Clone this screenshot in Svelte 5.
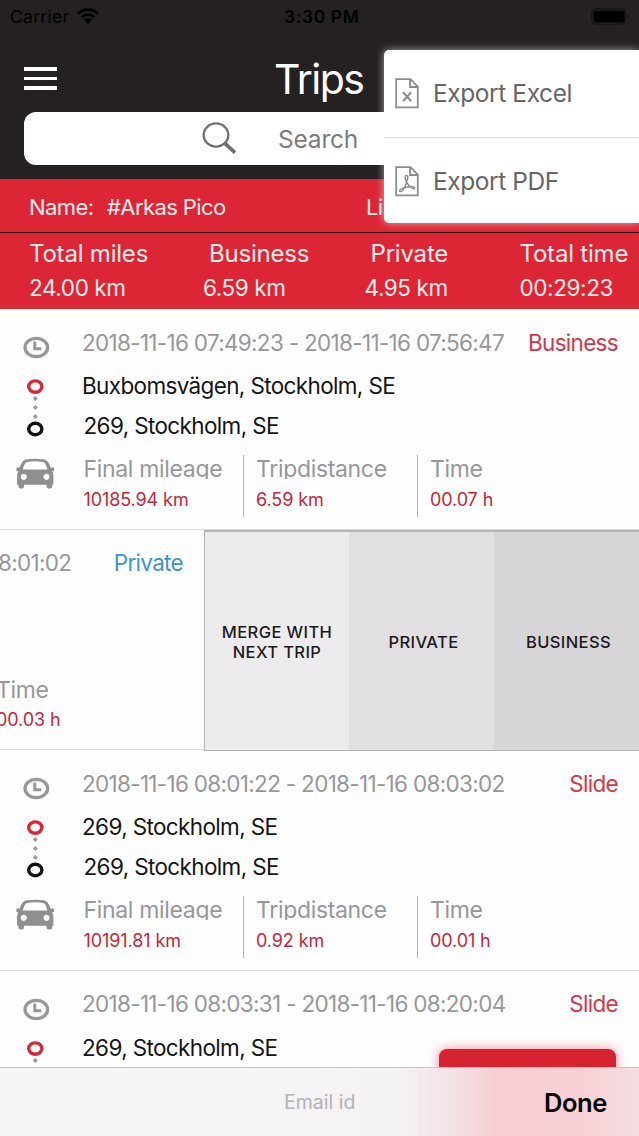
<script>
	const totals = [
		{ label: 'Total miles', value: '24.00 km', shift: 0 },
		{ label: 'Business', value: '6.59 km', shift: 6 },
		{ label: 'Private', value: '4.95 km', shift: 6 },
		{ label: 'Total time', value: '00:29:23', shift: 0 },
	];

	const trips = [
		{
			period: '2018-11-16 07:49:23 - 2018-11-16 07:56:47',
			type: 'Business',
			from: 'Buxbomsvägen, Stockholm, SE',
			to: '269, Stockholm, SE',
			mileage: '10185.94 km',
			distance: '6.59 km',
			time: '00.07 h',
		},
		{ swiped: true, period: '8:01:02', type: 'Private', time: '00.03 h' },
		{
			period: '2018-11-16 08:01:22 - 2018-11-16 08:03:02',
			type: 'Slide',
			from: '269, Stockholm, SE',
			to: '269, Stockholm, SE',
			mileage: '10191.81 km',
			distance: '0.92 km',
			time: '00.01 h',
		},
		{
			period: '2018-11-16 08:03:31 - 2018-11-16 08:20:04',
			type: 'Slide',
			from: '269, Stockholm, SE',
		},
	];
</script>

{#snippet file()}
	<path d="M1.2 1.2h14.3l7.3 7.3v20.8H1.2z M15 1.2v7.8h7.8" />
{/snippet}

<div class="screen">
	<header>
		<div class="status">
			<span class="carrier">Carrier</span>
			<svg class="wifi" width="22" height="16" viewBox="0 0 22 16">
				<path d="M1.2 5.6a14 14 0 0 1 19.6 0M4.7 9.2a9 9 0 0 1 12.6 0" fill="none" stroke="#000" stroke-width="2.9" />
				<path d="M7.2 11.6a5.4 5.4 0 0 1 7.6 0L11 15.5z" />
			</svg>
			<span class="clock">3:30 PM</span>
			<svg class="battery" width="38" height="17" viewBox="0 0 38 17">
				<rect x=".8" y=".8" width="33.5" height="15.4" rx="4" fill="none" stroke="#131011" />
				<rect x="2.5" y="2.8" width="31" height="11.6" rx="2" />
				<path d="M36 6c1.6.7 1.6 4 0 4.8z" fill="#131011" />
			</svg>
		</div>
		<div class="title-bar">
			<div class="burger"><i></i><i></i><i></i></div>
			<h1>Trips</h1>
		</div>
		<div class="search">
			<svg width="36" height="34" viewBox="0 0 36 34" fill="none" stroke="#6f6f6f">
				<ellipse cx="14" cy="13" rx="12.3" ry="11.6" stroke-width="2.3" />
				<path d="M22.6 21.2L33 30.6" stroke-width="3.6" />
			</svg>
			<span>Search</span>
		</div>
	</header>

	<section class="owner">
		<span class="key">Name:</span>
		<span class="name">#Arkas Pico</span>
		<span>Li</span>
	</section>

	<section class="totals">
		{#each totals as total}
			<div>
				<div class="total-label" style:padding-left="{total.shift}px">{total.label}</div>
				<div class="total-value">{total.value}</div>
			</div>
		{/each}
	</section>

	<main>
		{#each trips as trip}
			{#if trip.swiped}
				<article class="trip">
					<div class="rest">
						<div class="head">
							<span class="period">{trip.period}</span>
							<span class="type private">{trip.type}</span>
						</div>
						<div class="cell">
							<div class="cell-label">Time</div>
							<div class="cell-value">{trip.time}</div>
						</div>
					</div>
					<div class="actions">
						<button>MERGE WITH<br />NEXT TRIP</button>
						<button>PRIVATE</button>
						<button>BUSINESS</button>
					</div>
				</article>
			{:else}
				<article class="trip">
					<svg class="rail" width="70" height="200" viewBox="0 0 70 200" fill="none">
						<ellipse cx="36.3" cy="38.5" rx="11.3" ry="9.1" stroke="#979797" stroke-width="3.3" />
						<path d="M34.8 32.5v7.2h6.5" stroke="#979797" stroke-width="3" />
						<g fill="#9a9aa2">
							<path d="M35.3 86.9l2.6 2.6-2.6 2.6-2.6-2.6z" />
							<path d="M35.3 95.9l2.6 2.6-2.6 2.6-2.6-2.6z" />
							<path d="M35.3 104.9l2.6 2.6-2.6 2.6-2.6-2.6z" />
						</g>
						<ellipse cx="35.3" cy="77.6" rx="6.6" ry="5.7" stroke="#d6283a" stroke-width="3.4" />
						<ellipse cx="35.3" cy="120" rx="6.6" ry="5.7" stroke="#111" stroke-width="3.4" />
						<path
							fill="#8f8f8f"
							fill-rule="evenodd"
							d="M19.700 158.500C21.500 153 23.500 151 27 150.300c5-.9 11.500-.9 16.300 0 3.500.7 5.500 2.700 7.200 8.200h2.800c1.200 0 1.200 3.800 0 3.800h-1.400c1 1.300 1.500 2.500 1.500 5v8.500h-1.200v2c0 2.400-5.600 2.400-5.600 0v-2H24v2c0 2.400-5.600 2.400-5.600 0v-2h-1.300v-8.500c0-2.500.5-3.700 1.500-5h-1.400c-1.200 0-1.200-3.800 0-3.800z M22.800 160.500h24.700c-1.200-4.200-2-6.900-4.600-7.500-4.500-.9-11-.9-15.500 0-2.600.6-3.400 3.300-4.600 7.500z M23.700 164.700a3.100 3.100 0 1 0 .1 0z M46.500 164.700a3.100 3.100 0 1 0 .1 0z"
						/>
					</svg>
					<div class="body">
						<div class="head">
							<span class="period">{trip.period}</span>
							<span class="type">{trip.type}</span>
						</div>
						<div class="address">{trip.from}</div>
						{#if trip.to}
							<div class="address to">{trip.to}</div>
							<div class="cells">
								<div class="cell">
									<div class="cell-label">Final mileage</div>
									<div class="cell-value">{trip.mileage}</div>
								</div>
								<div class="cell">
									<div class="cell-label">Tripdistance</div>
									<div class="cell-value">{trip.distance}</div>
								</div>
								<div class="cell">
									<div class="cell-label">Time</div>
									<div class="cell-value">{trip.time}</div>
								</div>
							</div>
						{/if}
					</div>
				</article>
			{/if}
		{/each}
	</main>

	<div class="menu">
		<div class="item">
			<svg width="24" height="31" viewBox="0 0 24 31" fill="none" stroke="#8d8d8d" stroke-width="1.8">
				{@render file()}
				<path d="M8 14.2l8.2 9M16.2 14.2l-8.2 9" stroke-width="2.1" />
			</svg>
			<span>Export Excel</span>
		</div>
		<div class="item">
			<svg width="24" height="31" viewBox="0 0 24 31" fill="none" stroke="#8d8d8d" stroke-width="1.8">
				{@render file()}
				<path
					d="M11.500 15.500c-1.700-2.500-2-6 0-6s1.600 3.500 0 6c1 3 2.200 4.400 4 5.200 3-.6 4.600.4 4.100 1.500-.5 1.200-2.600.3-4.100-1.500-2.500 0-4 .3-6 1-1.500 2.700-3.600 4.700-4.600 3.600-1-1.300 1.500-3 4.600-3.600 1.100-2 1.800-4 2-6.200z"
					stroke-width="1.4"
				/>
			</svg>
			<span>Export PDF</span>
		</div>
	</div>

	<div class="fab"></div>

	<footer>
		<span class="email">Email id</span>
		<span class="done">Done</span>
	</footer>
</div>

<style>
	:global(body) {
		margin: 0;
		background: #fefefe;
	}

	.screen {
		position: relative;
		width: 639px;
		height: 1136px;
		overflow: hidden;
		background: #fefefe;
		font-family: Inter, 'Liberation Sans', sans-serif;
		color: #151515;
		white-space: nowrap;
	}

	header {
		height: 178.5px;
		background: #252021;
	}

	.status {
		display: flex;
		align-items: center;
		height: 32px;
		padding: 0 10px;
		color: #000;
		font-size: 17.5px;
	}

	.carrier {
		width: 67px;
		letter-spacing: 0.3px;
	}

	.clock {
		width: 80px;
		margin-left: 185px;
		font-weight: 600;
		letter-spacing: 0.6px;
	}

	.battery {
		margin-left: auto;
	}

	.title-bar {
		display: flex;
		align-items: center;
		height: 80px;
		padding: 0 24px;
	}

	.burger {
		display: grid;
		gap: 6.3px;
		width: 33px;
		margin-top: 13px;
	}

	.burger i {
		height: 3.4px;
		background: #fff;
	}

	h1 {
		margin: 14px 0 0 217px;
		color: #fff;
		font-size: 41px;
		font-weight: 400;
		letter-spacing: -1.5px;
		line-height: 50px;
	}

	.search {
		display: flex;
		align-items: center;
		height: 53px;
		margin-left: 24px;
		border-radius: 12px 0 0 12px;
		background: #fff;
		color: #7c7c7c;
		font-size: 24.5px;
		letter-spacing: -0.2px;
	}

	.search svg {
		margin-left: 178px;
	}

	.search span {
		margin-left: 40px;
	}

	.owner {
		display: flex;
		align-items: center;
		box-sizing: border-box;
		height: 54.5px;
		padding: 4px 0 0 29px;
		border-bottom: 1.5px solid #2b0509;
		background: #dc2535;
		color: #ffecec;
		font-size: 22px;
		letter-spacing: -0.6px;
	}

	.key {
		width: 78px;
	}

	.name {
		width: 259px;
	}

	.totals {
		display: grid;
		grid-template-columns: 174px 161.5px 155px auto;
		box-sizing: border-box;
		height: 76px;
		padding: 4px 0 0 29px;
		background: #dc2535;
		color: #ffecec;
	}

	.total-label {
		font-size: 24px;
		letter-spacing: -0.2px;
		line-height: 33px;
	}

	.total-value {
		margin-top: 1px;
		font-size: 22.5px;
		letter-spacing: -0.4px;
		line-height: 33px;
	}

	.trip {
		display: flex;
		box-sizing: border-box;
		height: 220.5px;
		border-bottom: 1px solid #d9d9dc;
	}

	.rail {
		flex: none;
	}

	.body {
		flex: 1;
		padding-left: 12px;
	}

	.head {
		display: flex;
		align-items: center;
		justify-content: space-between;
		height: 30px;
		padding: 18px 21px 0 0;
		font-size: 22.5px;
		letter-spacing: -0.69px;
	}

	.period {
		color: #97979b;
	}

	.type {
		color: #d2384b;
	}

	.private {
		color: #3e93cc;
	}

	.address {
		margin-top: 9px;
		font-size: 22.5px;
		letter-spacing: -0.64px;
		line-height: 40px;
	}

	.to {
		margin-top: 0;
		padding-left: 1.5px;
	}

	.cells {
		display: grid;
		grid-template-columns: 159px 172px auto;
		gap: 2px;
		margin-top: 9px;
	}

	.cell {
		height: 62px;
		box-sizing: border-box;
	}

	.cells .cell {
		padding-left: 1.5px;
	}

	.cells .cell + .cell {
		padding-left: 12px;
		border-left: 1.5px solid #b5b5ba;
	}

	/* the label box is shorter than its descenders */
	.cell-label {
		height: 24px;
		overflow: hidden;
		color: #97979b;
		font-size: 23px;
		letter-spacing: -0.33px;
		line-height: 29px;
	}

	.cell-value {
		margin-top: 9.5px;
		color: #c5263a;
		font-size: 18px;
		letter-spacing: -0.1px;
		line-height: 22px;
	}

	.rest {
		flex: none;
		width: 204px;
		overflow: hidden;
	}

	.rest .period {
		margin-left: -2px;
	}

	.rest .cell {
		margin: 98px 0 0 -4px;
	}

	.actions {
		display: grid;
		flex: none;
		grid-template-columns: 144px 145px 145px;
		box-sizing: border-box;
		height: 221.5px;
		border: solid #b5b3b6;
		border-width: 2px 0 1px 1px;
	}

	.actions button {
		padding: 2px 0 0;
		border: 0;
		background: #edebee;
		color: #1b191b;
		font: 500 16.5px/20px Inter, sans-serif;
		letter-spacing: 0.4px;
	}

	.actions button + button {
		padding-left: 4px;
		background: #e1dfe2;
	}

	.actions button + button + button {
		background: #d7d5d8;
	}

	.menu {
		position: absolute;
		top: 50px;
		right: 0;
		width: 255px;
		height: 173px;
		border-radius: 5px 0 0 5px;
		background: #fff;
		box-shadow: 0 0 8px rgba(255, 255, 255, 0.6);
		color: #666;
		font-size: 24.5px;
		letter-spacing: -0.42px;
	}

	.item {
		display: flex;
		align-items: center;
		gap: 14px;
		box-sizing: border-box;
		height: 87px;
		padding: 0 0 1px 11px;
	}

	.item + .item {
		height: 88px;
		border-top: 1px solid #e2e2e2;
	}

	.fab {
		position: absolute;
		top: 1049px;
		left: 439px;
		width: 177px;
		height: 60px;
		border-radius: 8px;
		background: #d72331;
		box-shadow: 0 0 12px rgba(255, 60, 80, 0.6);
	}

	footer {
		position: absolute;
		bottom: 0;
		left: 0;
		display: flex;
		align-items: center;
		box-sizing: border-box;
		width: 639px;
		height: 69px;
		border-top: 1px solid #c9c6c9;
		background: linear-gradient(90deg, #f6f5f5 0, #f4f2f5 400px, #f5e0e4 455px, #f8ced3 500px, #f8d0d5 580px, #f5dde1 639px);
	}

	.email {
		margin-left: 284px;
		color: #b4b1b6;
		font-size: 19.5px;
	}

	.done {
		margin: 0 32px 0 auto;
		color: #050304;
		font-size: 25.5px;
		font-weight: 600;
		letter-spacing: -0.4px;
	}
</style>
